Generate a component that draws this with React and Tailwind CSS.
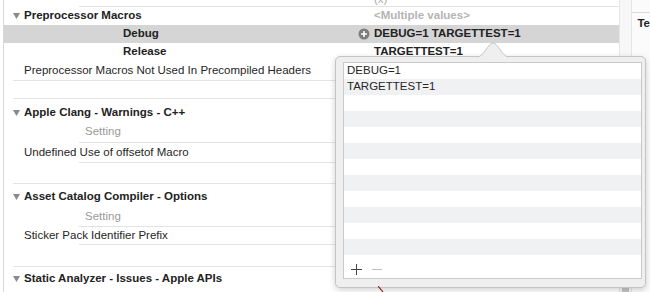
import React from 'react';

const LINE = 'bg-[#e3e3e3]';

// Fila de la tabla de ajustes: contenido + separador inferior
function Row({ h, line, highlight, children }) {
    return (
        <div className={`flex flex-col ${highlight ? 'bg-[#d5d5d5]' : ''}`} style={{ height: h }}>
            <div className="flex-1 flex items-center">{children}</div>
            {line === 'prop' && <div className={`h-px ml-[75px] ${LINE}`} />}
            {line === 'section' && <div className={`h-px ml-[9px] ${LINE}`} />}
            {!line && <div className="h-px" />}
        </div>
    );
}

function Triangle() {
    return (
        <svg width="7" height="6" viewBox="0 0 7 6" className="mr-[4px] shrink-0">
            <path d="M0 0 L7 0 L3.5 6 Z" fill="#8a8a8a" />
        </svg>
    );
}

function Header({ children }) {
    return (
        <div className="flex items-center pl-[9px] font-bold text-[#222]">
            <Triangle />
            <span>{children}</span>
        </div>
    );
}

function AddCircle() {
    return (
        <svg width="12" height="12" viewBox="0 0 12 12">
            <circle cx="6" cy="6" r="5.5" fill="#7d7d7d" />
            <path d="M6 3 V9 M3 6 H9" stroke="#fff" strokeWidth="1.6" />
        </svg>
    );
}

export default function App() {
    const filas = ['DEBUG=1', 'TARGETTEST=1', '', '', '', '', '', '', '', '', '', ''];

    return (
        <div
            className="w-[650px] h-[292px] relative overflow-hidden bg-white flex text-[11.5px] text-[#262626]"
            style={{ fontFamily: '"Liberation Sans", Arial, sans-serif' }}
        >
            {/* Tabla principal */}
            <div className="w-[618px] ml-[3px] border-l border-[#d8d8d8] flex flex-col">
                <Row h={7} line="prop">
                    <div className="w-[354px]" />
                    <div className="pl-[16px] text-[#aaa] leading-none -mt-[6px]">(x)</div>
                </Row>
                <Row h={18}>
                    <div className="w-[354px]"><Header>Preprocessor Macros</Header></div>
                    <div className="pl-[16px] text-[#b4b4b4] font-bold">&lt;Multiple values&gt;</div>
                </Row>
                <Row h={18} highlight>
                    <div className="w-[354px] pl-[119px] font-bold text-[#222]">Debug</div>
                    <div className="w-[16px] flex items-center"><AddCircle /></div>
                    <div className="font-bold text-[#222]">DEBUG=1 TARGETTEST=1</div>
                </Row>
                <Row h={19}>
                    <div className="w-[354px] pl-[119px] font-bold text-[#222]">Release</div>
                    <div className="pl-[16px] font-bold text-[#222]">TARGETTEST=1</div>
                </Row>
                <Row h={19} line="section">
                    <div className="w-[354px] pl-[20px]">Preprocessor Macros Not Used In Precompiled Headers</div>
                </Row>
                <Row h={18} line="section" />

                <Row h={25}>
                    <div className="w-[354px] pt-[3px]"><Header>Apple Clang - Warnings - C++</Header></div>
                </Row>
                <Row h={19} line="prop">
                    <div className="pl-[81px] text-[#9a9a9a] -mt-[2px]">Setting</div>
                </Row>
                <Row h={20} line="prop">
                    <div className="pl-[20px]">Undefined Use of offsetof Macro</div>
                </Row>
                <Row h={21} line="section" />

                <Row h={23}>
                    <div className="w-[354px] pt-[4px]"><Header>Asset Catalog Compiler - Options</Header></div>
                </Row>
                <Row h={20} line="prop">
                    <div className="pl-[81px] text-[#9a9a9a]">Setting</div>
                </Row>
                <Row h={18} line="prop">
                    <div className="pl-[20px]">Sticker Pack Identifier Prefix</div>
                </Row>
                <Row h={22} line="section" />

                <Row h={24}>
                    <div className="w-[354px]"><Header>Static Analyzer - Issues - Apple APIs</Header></div>
                </Row>
            </div>

            {/* Columna intermedia */}
            <div className="w-[13px] bg-[#f7f7f7] border-l border-[#e6e6e6] border-r border-[#d3d3d3] flex flex-col justify-end">
                <div className="h-[5px] mx-[2px] bg-[#c4c4c4]" />
            </div>

            {/* Panel derecho */}
            <div className="flex-1 flex flex-col bg-[#fbfbfb]">
                <div className="h-[13px] border-b border-[#dcdcdc]" />
                <div className="pl-[5px] pt-[2px] font-bold text-[#222] whitespace-nowrap">Te</div>
            </div>

            {/* Popover de valores */}
            <div className="absolute left-[335px] top-[56px] w-[311px] h-[232px] bg-[#efefef] border border-[#c4c4c4] rounded-[5px] shadow-[0_2px_6px_rgba(0,0,0,0.18)] pl-[7px] pt-[5px]">
                <div className="w-[299px] h-[217px] bg-white border border-[#c9c9c9] flex flex-col">
                    {filas.map((texto, i) => (
                        <div
                            key={i}
                            className={`h-[16px] shrink-0 flex items-center pl-[3px] ${i % 2 ? 'bg-[#f0f1f3]' : 'bg-white'}`}
                        >
                            {texto}
                        </div>
                    ))}
                    <div className="flex-1 flex items-end pb-[3px] pl-[7px] gap-[10px]">
                        <svg width="11" height="11" viewBox="0 0 11 11">
                            <path d="M5.5 0 V11 M0 5.5 H11" stroke="#444" strokeWidth="1" />
                        </svg>
                        <svg width="10" height="11" viewBox="0 0 10 11">
                            <path d="M0 5.5 H10" stroke="#bdbdbd" strokeWidth="1" />
                        </svg>
                    </div>
                </div>
            </div>

            {/* Flecha del popover */}
            <svg className="absolute left-[477px] top-[42px]" width="32" height="16" viewBox="0 0 32 16">
                <path d="M0 15 C7 15 11 1 16 1 C21 1 25 15 32 15 Z" fill="#efefef" />
                <path d="M0 15 C7 15 11 1 16 1 C21 1 25 15 32 15" fill="none" stroke="#c4c4c4" strokeWidth="1" />
            </svg>

            {/* Marca roja inferior */}
            <svg className="absolute left-[378px] top-[286px]" width="6" height="6" viewBox="0 0 6 6">
                <path d="M0 0 L5 6" stroke="#9b2a2a" strokeWidth="1.2" />
            </svg>
        </div>
    );
}
